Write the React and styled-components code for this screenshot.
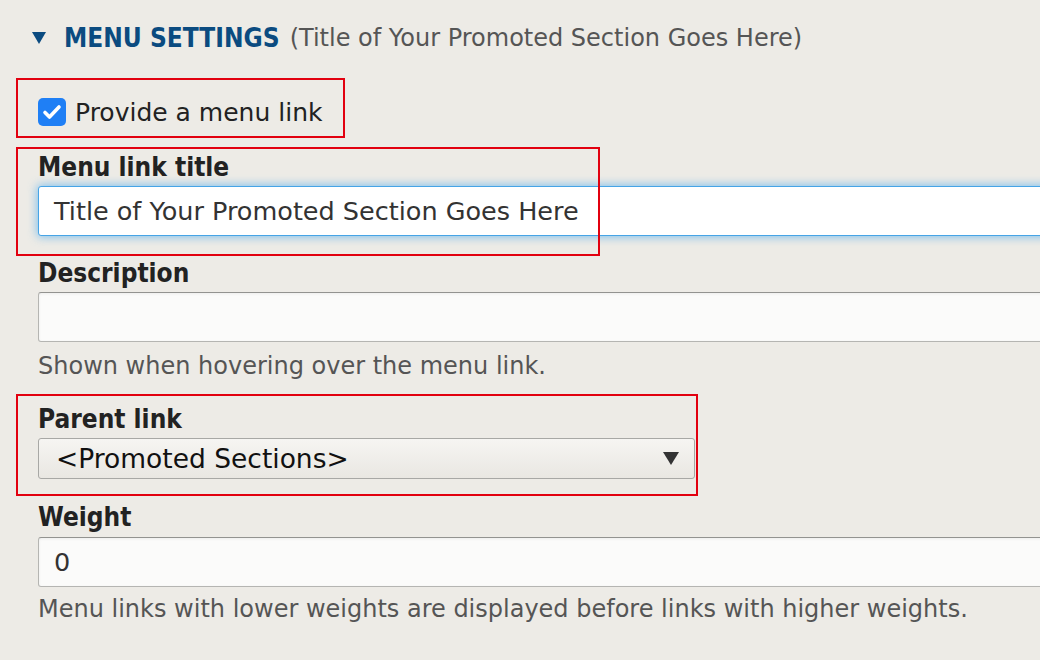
import React from 'react';
import styled, { createGlobalStyle } from 'styled-components';

const GlobalStyle = createGlobalStyle`
  body {
    margin: 0;
    background: #edebe6;
  }
`;

const Page = styled.div`
  position: relative;
  height: 660px;
  box-sizing: border-box;
  padding: 23px 0 0 38px;
  overflow: hidden;
  font-family: "DejaVu Sans", Verdana, sans-serif;
  color: #222;
`;

const Summary = styled.div`
  display: flex;
  align-items: center;
  height: 30px;
  margin-left: -6px;
  white-space: nowrap;
`;

const Toggle = styled.span`
  width: 0;
  height: 0;
  border-left: 7px solid transparent;
  border-right: 7px solid transparent;
  border-top: 12px solid #0b4b80;
  margin-right: 18px;
`;

const SummaryTitle = styled.span`
  font-family: "DejaVu Sans Condensed", "DejaVu Sans", sans-serif;
  font-weight: 700;
  font-size: 26px;
  color: #0b4b80;
`;

const SummaryNote = styled.span`
  font-size: 24px;
  color: #555;
  margin-left: 10px;
`;

const CheckRow = styled.label`
  position: relative;
  display: flex;
  align-items: center;
  height: 28px;
  margin-top: 45px;
  font-size: 25px;
  color: #222;
`;

const CheckBox = styled.span`
  display: flex;
  align-items: center;
  justify-content: center;
  width: 28px;
  height: 28px;
  border-radius: 5px;
  background: #1f7ff5;
  margin-right: 9px;
`;

const FormItem = styled.div`
  position: relative;
  margin-top: ${(p) => p.space}px;
`;

const Label = styled.label`
  display: block;
  height: 28px;
  line-height: 28px;
  margin-bottom: ${(p) => p.after || 5}px;
  font-family: "DejaVu Sans Condensed", "DejaVu Sans", sans-serif;
  font-weight: 700;
  font-size: 26px;
  color: #222;
`;

const TextInput = styled.div`
  display: flex;
  align-items: center;
  box-sizing: border-box;
  width: calc(100% + 40px);
  height: 50px;
  padding-left: 15px;
  border: 1px solid ${(p) => (p.focused ? '#46a4e6' : '#b5b5b2')};
  border-top-color: ${(p) => (p.focused ? '#46a4e6' : '#939390')};
  border-radius: 3px;
  background: ${(p) => (p.focused ? '#fff' : '#fbfbfa')};
  box-shadow: ${(p) =>
    p.focused
      ? '0 0 10px 1px rgba(88, 176, 238, 0.75)'
      : 'inset 0 1px 3px rgba(0, 0, 0, 0.06)'};
  font-size: 25.5px;
  color: #333;
  white-space: nowrap;
`;

const Select = styled.div`
  display: flex;
  align-items: center;
  justify-content: space-between;
  box-sizing: border-box;
  width: 657px;
  height: 41px;
  padding: 0 15px 0 17px;
  border: 1px solid #a8a8a5;
  border-radius: 3px;
  background: linear-gradient(#f6f5f2, #e9e7e2);
  font-size: 26.5px;
  color: #111;
`;

const Arrow = styled.span`
  width: 0;
  height: 0;
  border-left: 8px solid transparent;
  border-right: 8px solid transparent;
  border-top: 13px solid #333;
`;

const Help = styled.div`
  height: 26px;
  line-height: 26px;
  margin-top: ${(p) => p.space}px;
  font-size: 24px;
  color: #555;
  white-space: nowrap;
`;

const Highlight = styled.div`
  position: absolute;
  left: -22px;
  top: ${(p) => p.top}px;
  bottom: ${(p) => p.bottom}px;
  width: ${(p) => p.width}px;
  box-sizing: border-box;
  border: 2px solid #e2000f;
  pointer-events: none;
`;

export default function App() {
  return (
    <>
      <GlobalStyle />
      <Page>
        <Summary>
          <Toggle />
          <SummaryTitle>MENU SETTINGS</SummaryTitle>
          <SummaryNote>(Title of Your Promoted Section Goes Here)</SummaryNote>
        </Summary>

        <CheckRow>
          <CheckBox>
            <svg width="28" height="28" viewBox="0 0 28 28">
              <path d="M7 14.5l4.5 4.5 9.5-10" fill="none" stroke="#fff" strokeWidth="3.6" strokeLinecap="round" strokeLinejoin="round" />
            </svg>
          </CheckBox>
          Provide a menu link
          <Highlight top={-20} bottom={-12} width={329} />
        </CheckRow>

        <FormItem space={27}>
          <Label>Menu link title</Label>
          <TextInput focused>Title of Your Promoted Section Goes Here</TextInput>
          <Highlight top={-6} bottom={-20} width={584} />
        </FormItem>

        <FormItem space={23}>
          <Label>Description</Label>
          <TextInput />
          <Help space={11}>Shown when hovering over the menu link.</Help>
        </FormItem>

        <FormItem space={26}>
          <Label>Parent link</Label>
          <Select>
            &lt;Promoted Sections&gt;
            <Arrow />
          </Select>
          <Highlight top={-11} bottom={-17} width={682} />
        </FormItem>

        <FormItem space={24}>
          <Label after={6}>Weight</Label>
          <TextInput>0</TextInput>
          <Help space={9}>Menu links with lower weights are displayed before links with higher weights.</Help>
        </FormItem>
      </Page>
    </>
  );
}
